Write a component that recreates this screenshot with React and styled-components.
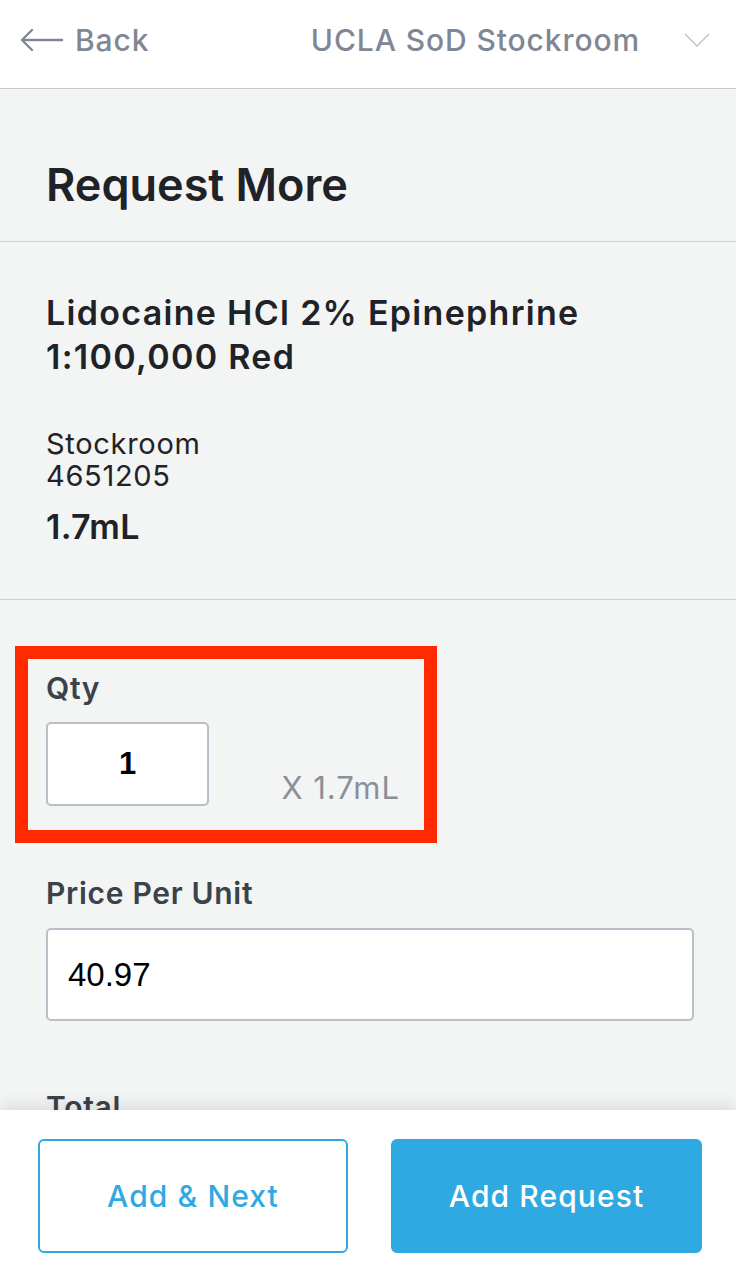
import React from "react";
import styled, { createGlobalStyle } from "styled-components";

const Global = createGlobalStyle`
  html, body { margin: 0; padding: 0; height: 100%; }
  body { font-family: Inter, "Open Sans", sans-serif; background: #f3f4f4; }
  #root { height: 100%; }
  * { box-sizing: border-box; }
`;

const Screen = styled.div`
  height: 100vh;
  display: flex;
  flex-direction: column;
  overflow: hidden;
  background: #f3f4f4;
`;

const Header = styled.header`
  flex: 0 0 89px;
  background: #fff;
  border-bottom: 1px solid #c8c9cd;
  display: flex;
  align-items: center;
  padding: 0 26px 8px 20px;
  color: #7f8795;
  font-size: 30px;
  font-weight: 500;
  letter-spacing: 0.9px;
`;

const BackLink = styled.div`
  display: flex;
  align-items: center;
  gap: 11px;
`;

const Spacer = styled.div`flex: 1;`;

const Title = styled.div`
  margin-right: 44px;
`;

const Scroll = styled.main`
  flex: 1;
  overflow: hidden;
`;

const Section = styled.section`
  padding: ${(p) => p.$pad};
  border-bottom: ${(p) => (p.$border ? "1px solid #cdcfd0" : "none")};
`;

const Heading = styled.h1`
  margin: 0;
  font-size: 45px;
  line-height: 48px;
  font-weight: 600;
  color: #1f2226;
  letter-spacing: 0;
`;

const ProductName = styled.h2`
  margin: 0;
  font-size: 34px;
  line-height: 44px;
  font-weight: 600;
  color: #1f2226;
  letter-spacing: 1.3px;
`;

const Meta = styled.div`
  margin-top: 49px;
  font-size: 29px;
  line-height: 32px;
  color: #1f2226;
  letter-spacing: 0.7px;
`;

const Size = styled.div`
  margin-top: 15px;
  font-size: 34px;
  line-height: 40px;
  font-weight: 600;
  color: #1f2226;
  letter-spacing: 0.3px;
`;

const Highlight = styled.div`
  margin: 46px 0 0 -31px;
  width: 422px;
  border: 13px solid #ff2a00;
  padding: 13px 24px 24px 18px;
`;

const Label = styled.div`
  font-size: 30px;
  line-height: 32px;
  font-weight: 600;
  color: #3a424b;
  letter-spacing: 0.7px;
`;

const QtyRow = styled.div`
  margin-top: 18px;
  display: flex;
  align-items: flex-end;
  justify-content: space-between;
`;

const Input = styled.div`
  height: ${(p) => p.$h}px;
  width: ${(p) => p.$w || "100%"};
  background: #fff;
  border: 2px solid #b9bec8;
  border-radius: 5px;
  display: flex;
  align-items: center;
  justify-content: ${(p) => (p.$center ? "center" : "flex-start")};
  padding: 0 20px;
  font-family: "Liberation Sans", Arial, sans-serif;
  font-size: ${(p) => p.$fs}px;
  font-weight: ${(p) => (p.$bold ? 700 : 400)};
  color: #000;
`;

const Unit = styled.div`
  font-size: 31px;
  line-height: 32px;
  color: #8a909a;
  margin-bottom: 2px;
  letter-spacing: 1px;
`;

const Field = styled.div`
  margin-top: ${(p) => p.$mt}px;
`;

const Footer = styled.footer`
  flex: 0 0 163px;
  background: #fff;
  box-shadow: 0 -6px 14px rgba(0, 0, 0, 0.09);
  position: relative;
  display: grid;
  grid-template-columns: 310px 311px;
  column-gap: 43px;
  padding: 29px 34px 20px 38px;
`;

const Button = styled.button`
  height: 114px;
  border-radius: 6px;
  border: 2px solid #2fa9e1;
  background: ${(p) => (p.$primary ? "#2ea9e1" : "#fff")};
  color: ${(p) => (p.$primary ? "#fff" : "#2fa9e1")};
  font-family: Inter, "Open Sans", sans-serif;
  font-size: 30px;
  font-weight: 500;
  letter-spacing: 1.1px;
`;

export default function App() {
  return (
    <>
      <Global />
      <Screen>
        <Header>
          <BackLink>
            <svg width="44" height="24" viewBox="0 0 44 24" fill="none" stroke="#7f8795" strokeWidth="2.4" strokeLinecap="round" strokeLinejoin="round">
              <path d="M3 12 H42" />
              <path d="M12 2 L2 12 L12 22" />
            </svg>
            <span>Back</span>
          </BackLink>
          <Spacer />
          <Title>UCLA SoD Stockroom</Title>
          <svg width="26" height="14" viewBox="0 0 26 14" fill="none" stroke="#c3c7ce" strokeWidth="1.6">
            <path d="M1 1 L13 13 L25 1" />
          </svg>
        </Header>
        <Scroll>
          <Section $border $pad="72px 46px 32px">
            <Heading>Request More</Heading>
          </Section>
          <Section $border $pad="49px 40px 52px 46px">
            <ProductName>
              Lidocaine HCl 2% Epinephrine
              <br />
              1:100,000 Red
            </ProductName>
            <Meta>
              Stockroom
              <br />
              4651205
            </Meta>
            <Size>1.7mL</Size>
          </Section>
          <Section $pad="0 42px 0 46px">
            <Highlight>
              <Label>Qty</Label>
              <QtyRow>
                <Input $h={84} $w="163px" $fs={31} $center $bold>1</Input>
                <Unit>X 1.7mL</Unit>
              </QtyRow>
            </Highlight>
            <Field $mt={34}>
              <Label>Price Per Unit</Label>
              <Field $mt={19}>
                <Input $h={93} $fs={33}>40.97</Input>
              </Field>
            </Field>
            <Field $mt={70}>
              <Label>Total</Label>
            </Field>
          </Section>
        </Scroll>
        <Footer>
          <Button>Add &amp; Next</Button>
          <Button $primary>Add Request</Button>
        </Footer>
      </Screen>
    </>
  );
}
